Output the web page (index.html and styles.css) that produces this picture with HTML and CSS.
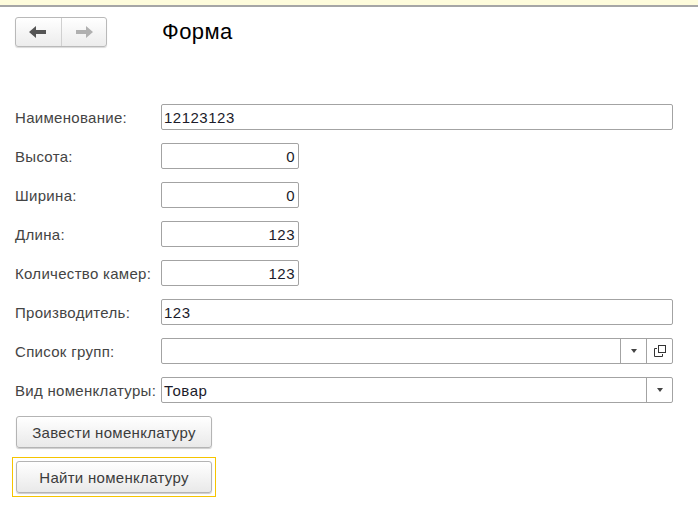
FILE: index.html
```html
<!DOCTYPE html>
<html lang="ru">
<head>
<meta charset="utf-8">
<link rel="stylesheet" href="styles.css">
</head>
<body>
<div class="topstrip"></div>
<div class="header">
  <div class="nav">
    <span class="navbtn">
      <svg width="18" height="12" viewBox="0 0 18 12"><path d="M0 6 L7 0 V4 H17 V8 H7 V12 Z" fill="#555"/></svg>
    </span>
    <span class="navbtn">
      <svg width="18" height="12" viewBox="0 0 18 12"><path d="M18 6 L11 0 V4 H1 V8 H11 V12 Z" fill="#b0b0b0"/></svg>
    </span>
  </div>
  <div class="title">Форма</div>
</div>
<div class="form">
  <label class="lbl">Наименование:</label>
  <div class="field wide"><span class="val">12123123</span></div>

  <label class="lbl">Высота:</label>
  <div class="field num"><span class="val">0</span></div>

  <label class="lbl">Ширина:</label>
  <div class="field num"><span class="val">0</span></div>

  <label class="lbl">Длина:</label>
  <div class="field num"><span class="val">123</span></div>

  <label class="lbl">Количество камер:</label>
  <div class="field num"><span class="val">123</span></div>

  <label class="lbl">Производитель:</label>
  <div class="field wide"><span class="val">123</span></div>

  <label class="lbl">Список групп:</label>
  <div class="field wide combo">
    <span class="val"></span>
    <span class="cbtn"><span class="tri"></span></span>
    <span class="cbtn">
      <svg width="12" height="12" viewBox="0 0 12 12"><rect x="4.5" y="0.5" width="7" height="7" fill="none" stroke="#333"/><path d="M0.5 3.5 H3 M0.5 3.5 V11.5 H8.5 V9" fill="none" stroke="#333"/></svg>
    </span>
  </div>

  <label class="lbl">Вид номенклатуры:</label>
  <div class="field wide combo">
    <span class="val">Товар</span>
    <span class="cbtn"><span class="tri"></span></span>
  </div>
</div>
<div class="actions">
  <div class="btnwrap"><button class="btn">Завести номенклатуру</button></div>
  <div class="btnwrap focused"><button class="btn">Найти номенклатуру</button></div>
</div>
</body>
</html>
```
FILE: styles.css
```css
html, body {
  margin: 0;
  padding: 0;
  background: #fff;
  font-family: "Liberation Sans", Arial, sans-serif;
  font-size: 15px;
  letter-spacing: 0.3px;
}
.topstrip {
  height: 5px;
  background: #fefcdc;
  border-bottom: 2px solid #a6a6a6;
}
.header {
  display: flex;
  align-items: center;
  padding: 10px 0 0 15px;
  height: 30px;
}
.nav {
  display: flex;
  width: 90px;
  height: 28px;
  border: 1px solid #b9b9b9;
  border-radius: 3px;
  background: linear-gradient(#ffffff, #ececec);
  box-shadow: 0 1px 1px rgba(0,0,0,0.15);
}
.navbtn {
  flex: 1;
  display: flex;
  align-items: center;
  justify-content: center;
}
.navbtn + .navbtn {
  border-left: 1px solid #d0d0d0;
}
.title {
  margin-left: 55px;
  font-size: 22px;
  letter-spacing: 0.4px;
  color: #000;
  margin-top: 0;
}
.form {
  margin-top: 57px;
  padding-left: 15px;
  display: grid;
  grid-template-columns: 146px 512px;
  row-gap: 13px;
  align-items: center;
}
.lbl {
  color: #444;
  white-space: nowrap;
}
.field {
  box-sizing: border-box;
  height: 26px;
  border: 1px solid #a3a3a3;
  border-radius: 2px;
  display: flex;
  align-items: center;
  color: #1b1b2a;
  background: #fff;
  letter-spacing: 0.5px;
}
.field.num {
  width: 138px;
  justify-content: flex-end;
  padding-right: 3px;
}
.field.wide {
  width: 512px;
  padding-left: 2px;
}
.field.combo .val {
  flex: 1;
}
.cbtn {
  width: 25px;
  height: 24px;
  border-left: 1px solid #a3a3a3;
  display: flex;
  align-items: center;
  justify-content: center;
}
.tri {
  width: 0;
  height: 0;
  border-left: 3.5px solid transparent;
  border-right: 3.5px solid transparent;
  border-top: 4px solid #444;
}
.actions {
  margin-top: 13px;
  padding-left: 12px;
  display: flex;
  flex-direction: column;
  align-items: flex-start;
  gap: 9px;
}
.btnwrap {
  padding: 3px;
  border: 1px solid transparent;
}
.btnwrap.focused {
  border-color: #f5c400;
}
.btnwrap:first-child {
  padding: 0 3px;
  border: 0;
  margin-left: 1px;
}
.btn {
  box-sizing: border-box;
  width: 196px;
  height: 32px;
  border: 1px solid #b4b4b4;
  border-radius: 3px;
  background: linear-gradient(#ffffff, #e9e9e9);
  box-shadow: 0 1px 1px rgba(0,0,0,0.2);
  font-family: "Liberation Sans", Arial, sans-serif;
  font-size: 15px;
  letter-spacing: 0.3px;
  color: #3c3c3c;
  padding: 0;
}
```
